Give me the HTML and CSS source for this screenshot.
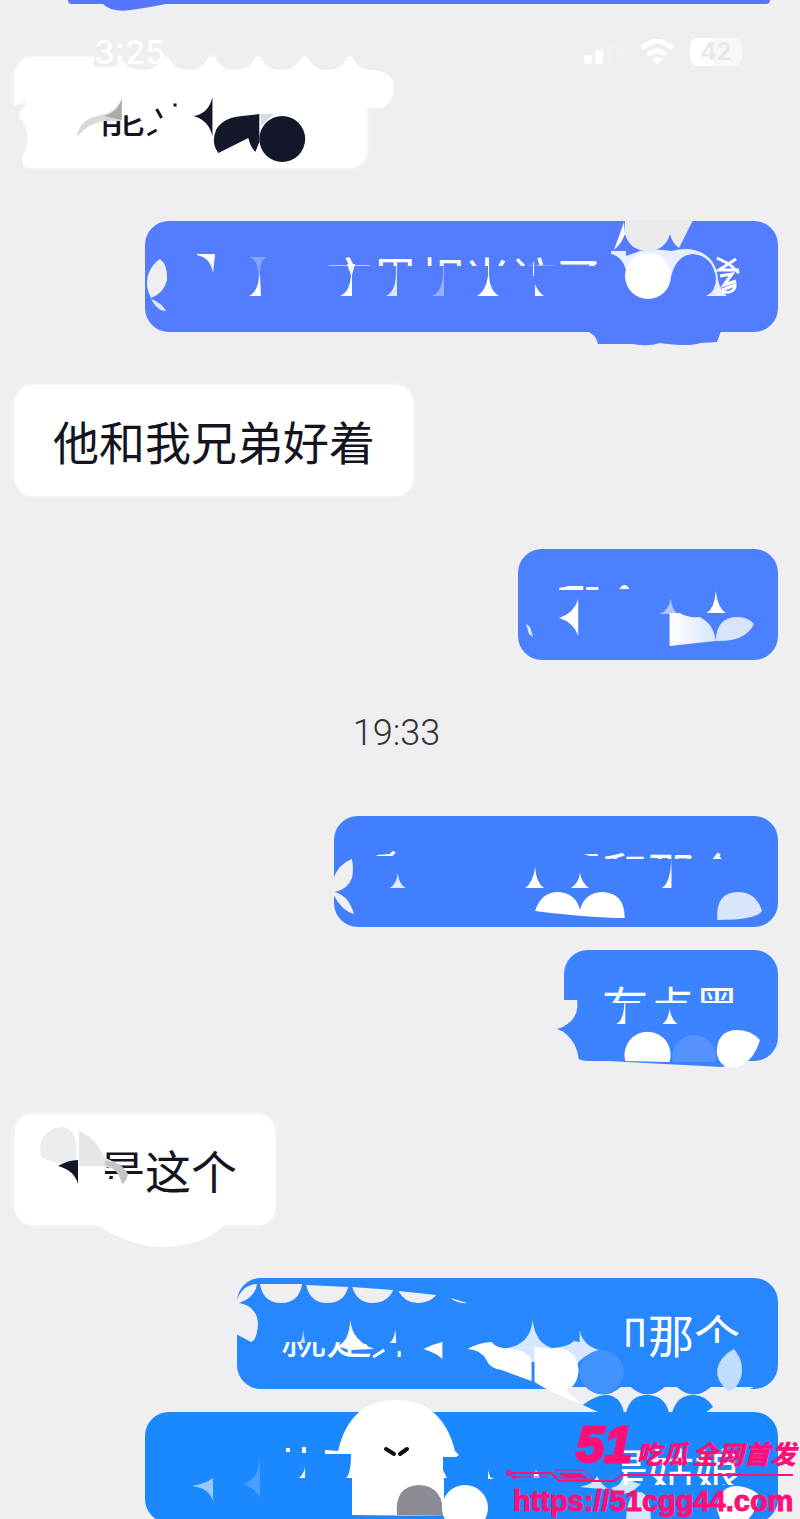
FILE: index.html
```
<!DOCTYPE html>
<html lang="zh-CN">
<head>
  <meta charset="UTF-8">
  <meta name="viewport" content="width=device-width, initial-scale=1.0">
  <title>聊天记录</title>
  <link rel="stylesheet" href="styles.css">
</head>
<body>
  <div class="screen">
    <!-- Status bar, floats over the conversation -->
    <header class="status">
      <span class="clock">3:25</span>
      <div class="status-icons">
        <svg width="40" height="26" viewBox="0 0 40 26" fill="#fff" aria-hidden="true">
          <rect x="0" y="16" width="8" height="9" rx="2"/>
          <rect x="11" y="11" width="8" height="14" rx="2"/>
          <rect x="22" y="6" width="7" height="19" rx="2" opacity=".15"/>
          <rect x="32" y="1" width="7" height="24" rx="2" opacity=".15"/>
        </svg>
        <svg width="34" height="26" viewBox="0 0 34 26" fill="none" stroke="#fff" stroke-width="5" aria-hidden="true">
          <path d="M2 9Q17-4 32 9"/>
          <path d="M8 16Q17 8 26 16"/>
          <path d="M12 20Q17 16 22 20L17 26z" fill="#fff" stroke="none"/>
        </svg>
        <span class="battery">42</span>
      </div>
    </header>

    <main class="chat">
      <div class="msg me peek">
        <svg class="art" viewBox="68 0 702 3" preserveAspectRatio="none" fill="#5577ff"><path d="M102 2Q108 8 124 8Q140 7 166 3z"/></svg>
      </div>

      <div class="msg other turn">
        <p>　<span class="low">能</span>　　　　</p>
        <svg class="art" viewBox="15 57 353 111" preserveAspectRatio="none">
          <g fill="#efeef0">
            <path d="M94 52H119Q121 66 112 67H94z"/>
            <path d="M120 52Q124 70 143 70Q160 70 165 52z"/>
            <path d="M167 52Q171 70 189 70Q206 70 211 52z"/>
            <path d="M214 52Q218 70 236 70Q253 70 258 52z"/>
            <path d="M260 52Q264 70 282 70Q299 70 304 52z"/>
            <path d="M307 52Q311 70 328 70Q345 70 350 52z"/>
            <path d="M352 52Q356 70 374 70V50z"/>
            <path d="M8 108L27 102L18 115Q35 136 22 157L24 174H8z"/>
          </g>
          <path d="M350 70H374Q394 72 395 86Q394 106 382 108H355z" fill="#fff"/>
          <path d="M77 137Q80 119 98 116Q118 112 122 98V121H105Q90 122 77 137z" fill="#d9d9d9"/>
          <path d="M104 116Q119 112 122 98V120z" fill="#aaa"/>
          <path d="M157 109L162 118M148 135L157 130M174 105H177" stroke="#14141e" stroke-width="3"/>
          <g fill="#14172a">
            <path d="M194 116Q209 114 213 97V136Q209 120 194 116z"/>
            <path d="M219 153Q211 143 217 129Q225 117 243 116L260 114V142L256 152Q251 147 249 138z"/>
          </g>
          <path d="M261 114H275L270 118L262 126z" fill="#d9dbe0"/>
          <circle cx="283" cy="139" r="23" fill="#14172a"/>
        </svg>
      </div>

      <div class="msg me wide tone-1 turn">
        <p>　　　<span class="top-sm">文里相米访了</span>　　　</p>
        <svg class="art" viewBox="145 221 633 111" preserveAspectRatio="none" fill="#fff">
          <path d="M160 259Q168 265 167 280Q164 293 151 298Q145 287 148 275Q152 264 160 259z" fill="#efeef0"/>
          <path d="M151 299Q162 303 166 311Q158 312 151 299z" fill="#dcecff"/>
          <path d="M197 254H215L213 273Q211 258 197 255z"/>
          <path d="M250 257H266Q259 262 260 276H258Q259 262 250 257z" opacity=".3"/>
          <path d="M249 296Q258 292 259 276H260L261 296z"/>
          <path d="M340 296Q350 292 351 275L347 264H355L352 275V296z"/>
          <path d="M386 296Q395 292 396 275V264H397V296" opacity=".8"/>
          <path d="M432 296Q442 292 443 275V264H444V296" opacity=".4"/>
          <path d="M477 296Q486 291 488 276V266H489V276Q490 291 499 296z"/>
          <path d="M533 262H534V276H533zM535 284Q538 292 544 296H535z"/>
          <path d="M625 220H693L679 248Q672 243 670 234Q665 251 648 251Q630 251 625 234z" fill="#eaeaec"/>
          <path d="M624 222L625 234Q622 243 614 250z"/>
          <path d="M611 251H626V256L640 251Q653 248 672 251Q690 246 704 254Q717 262 718 280Q721 292 727 296H706Q716 292 716 278Q713 256 693 254Q676 255 671 277L640 262L626 270Q622 256 611 254z" fill="#e9efff"/>
          <circle cx="648" cy="276" r="23"/>
          <path d="M717 258L729 264L739 273M736 259L719 270H739M720 276L732 274L724 285L736 281M721 292Q735 294 735 285L722 290" fill="none" stroke="#fff" stroke-width="3"/>
          <path d="M586 331Q596 334 598 344H633Q648 347 660 343Q690 347 700 343L717 342L721 331z" fill="#547cff"/>
        </svg>
      </div>

      <div class="msg other turn"><p>他和我兄弟好着</p></div>

      <div class="msg me tone-2 turn">
        <p>　　　　</p>
        <svg class="art" viewBox="519 550 259 111" preserveAspectRatio="none" fill="#fff">
          <defs>
            <linearGradient id="fade"><stop offset="0" stop-color="#fff"/><stop offset="1" stop-color="#d8e4fc"/></linearGradient>
          </defs>
          <path d="M560 589L570 587H584V591H560zM587 588H599V591H587zM620 590Q625 582 630 590z"/>
          <path d="M560 619Q575 614 579 600V637Q574 623 560 619z"/>
          <path d="M527 625L531 628L534 638L530 635z" fill="#dcecff"/>
          <path d="M660 615Q670 611 671 599Q672 610 678 615z" opacity=".55"/>
          <path d="M707 614Q715 609 716 592Q718 609 726 614z"/>
          <path d="M670 614H680Q688 619 700 618Q714 625 716 642L670 647z" fill="url(#fade)"/>
          <path d="M716 641Q717 618 738 618Q748 618 754 625Q746 643 716 642z" fill="#d8e4fc"/>
        </svg>
      </div>

      <time class="time">19:33</time>

      <div class="msg me tone-3">
        <p>　　　　　<span class="top-xs">和那个</span></p>
        <svg class="art" viewBox="332 816 446 111" preserveAspectRatio="none" fill="#fff">
          <path d="M331 880Q336 864 350 859Q352 870 350 878Q346 889 333 892Q347 896 352 914Q340 911 331 894z" fill="#efeef0"/>
          <path d="M375 855L388 854L391 851L394 852L391 856H375zM583 854H597V856H589z"/>
          <path d="M388 888Q395 884 396 873Q397 884 404 888z" opacity=".85"/>
          <path d="M524 888Q532 883 534 867Q535 883 543 888zM570 888Q578 883 579 873Q581 883 588 888zM661 888Q670 884 671 858V888z"/>
          <path d="M534 911Q540 892 557 892Q575 893 579 910Q584 892 602 892Q624 893 624 918Q590 918 534 911z"/>
          <path d="M717 920Q715 892 738 892Q756 892 762 911Q756 920 717 920z" fill="#d9e5fb"/>
        </svg>
      </div>

      <div class="msg me tone-4">
        <p><span class="top-md">有点黑</span></p>
        <svg class="art" viewBox="565 950 213 111" preserveAspectRatio="none" fill="#fff">
          <path d="M563 1000H578Q581 1020 560 1029Q579 1040 580 1063H563z" fill="#efeef0"/>
          <path d="M558 1029Q571 1026 578 1014V1046Q571 1033 558 1029z" fill="#3c83ff"/>
          <path d="M617 1024Q625 1020 625 1001H640V1002H626V1024zM663 1024Q669 1020 670 1009Q672 1020 678 1024z"/>
          <path d="M590 1060H750L722 1067z" fill="#3c83ff"/>
          <path d="M626 1061A23 23 0 1 1 670 1062z"/>
          <path d="M673 1062A22 22 0 1 1 716 1062z" fill="#5592ff"/>
          <path d="M717 1053Q717 1030 738 1030Q751 1030 760 1040Q754 1061 738 1067Q720 1070 717 1053z"/>
        </svg>
      </div>

      <div class="msg other turn">
        <p>　<span class="top-lg">是</span>这个</p>
        <svg class="art" viewBox="15 1114 260 111" preserveAspectRatio="none">
          <path d="M95 1224Q130 1246 160 1247Q205 1247 225 1224z" fill="#fff"/>
          <path d="M41 1157Q36 1131 61 1127Q79 1127 76 1160Q60 1167 41 1157z" fill="#ededef"/>
          <path d="M79 1131Q95 1137 105 1158Q118 1162 122 1171L102 1166H79z" fill="#e6e6e8"/>
          <path d="M105 1161Q121 1161 128 1174Q126 1183 122 1184Q118 1168 105 1165z" fill="#c4c4c7"/>
          <path d="M58 1166Q68 1160 78 1160V1184Q74 1170 58 1166z" fill="#14172a"/>
        </svg>
      </div>

      <div class="msg me wide tone-5 turn">
        <p><span class="low-lg">就是</span>　　　　　<span class="right">和</span>那<span class="top-xl">个</span></p>
        <svg class="art" viewBox="238 1278 540 111" preserveAspectRatio="none" fill="#fff">
          <g fill="#efeef0">
            <path d="M237 1276H257Q242 1282 238 1294z"/>
            <path d="M237 1303Q242 1285 258 1284Q256 1298 240 1303Q258 1306 259 1324Q258 1340 252 1342L237 1334z"/>
            <path d="M261 1284H303Q300 1303 282 1303Q264 1303 261 1284z"/>
            <path d="M307 1285L349 1287Q345 1303 328 1303Q311 1303 307 1285z"/>
            <path d="M353 1287L394 1290Q388 1303 373 1303Q358 1303 353 1287z"/>
            <path d="M399 1291L437 1295Q430 1303 418 1303Q406 1303 399 1291z"/>
            <path d="M451 1298L468 1303Q458 1304 451 1298z"/>
          </g>
          <path d="M300 1343Q304 1339 304 1330L306 1343z" opacity=".7"/>
          <path d="M338 1346Q350 1342 351 1320Q353 1341 375 1349L350 1350zM390 1343Q395 1340 396 1329L397 1343zM424 1349Q434 1344 443 1342V1359Q437 1353 424 1349z"/>
          <path d="M374 1357L385 1350M400 1351V1357" stroke="#fff" stroke-width="3"/>
          <path d="M508 1348Q531 1344 533 1320Q536 1343 552 1348Q569 1347 574 1341L580 1342V1330Q583 1345 599 1350Q582 1356 577 1365L533 1362z" fill="#d6e7ff"/>
          <path d="M468 1349Q478 1343 492 1342Q498 1349 508 1348Q526 1350 532 1359V1381L502 1370Q490 1368 487 1360Q482 1350 468 1349z"/>
          <path d="M535 1346Q545 1350 555 1348Q577 1348 579 1370Q578 1386 567 1390L583 1405Q552 1393 535 1382z"/>
          <path d="M568 1387H754L713 1407H584Q575 1396 568 1392z" fill="#efeef0"/>
          <path d="M586 1387H621Q604 1402 586 1387zM631 1387H665Q648 1402 631 1387zM677 1387H711Q694 1402 677 1387z" fill="#2787ff"/>
          <circle cx="602" cy="1372" r="22" fill="#4292ff"/>
          <path d="M734 1349Q745 1362 741 1378Q736 1391 728 1391Q717 1382 717 1370Q720 1356 734 1349z" fill="#c0dcff"/>
        </svg>
      </div>

      <div class="msg me wide tone-6">
        <p>　　　　　　　　　<span class="tail">是姑娘</span></p>
        <svg class="art" viewBox="145 1412 633 111" preserveAspectRatio="none" fill="#fff">
          <path d="M583 1405Q600 1392 612 1396Q622 1400 624 1413H600zM626 1413Q630 1395 647 1395Q665 1395 669 1413zM672 1413Q677 1395 693 1395Q706 1395 713 1407L705 1413z" fill="#1c88ff"/>
          <path d="M192 1486Q205 1484 213 1478V1501Q209 1488 192 1486z" opacity=".55"/>
          <path d="M243 1484Q259 1480 260 1456V1498Q255 1488 243 1484z" opacity=".2"/>
          <path d="M286 1448H290V1452H286zM302 1447H306V1453H302zM299 1478Q304 1474 305 1467V1478zM488 1470L490 1477L494 1479H488zM533 1478L536 1470L540 1478z"/>
          <path d="M338 1451Q350 1400 396 1400Q442 1400 455 1451L459 1455L456 1457H443V1470L447 1478H444V1516L352 1515V1478H346Q351 1474 351 1454H325V1450z"/>
          <path d="M386 1449L394 1454M407 1449L400 1454" stroke="#111" stroke-width="4" stroke-linecap="round"/>
          <path d="M397 1515Q394 1486 419 1485Q444 1486 443 1516z" fill="#8d8b94"/>
          <circle cx="465" cy="1508" r="23"/>
          <path d="M580 1487Q594 1484 597 1476Q602 1487 611 1490zM611 1488Q622 1486 624 1474Q630 1482 641 1484L634 1490Q622 1498 611 1488z" opacity=".8"/>
          <path d="M626 1524Q626 1493 640 1492Q651 1494 651 1524z" opacity=".8"/>
          <path d="M717 1510Q717 1488 735 1486Q748 1486 758 1494Q758 1514 742 1524H722z"/>
        </svg>
      </div>
    </main>

    <!-- Site mark in the corner -->
    <aside class="mark">
      <div class="mark-title"><span class="mark-num">51</span><span class="mark-cn">吃瓜</span><span class="mark-cn">全网首发</span></div>
      <svg class="mark-line" viewBox="0 0 290 14" fill="none" stroke="#ff0f77" stroke-width="2" aria-hidden="true">
        <circle cx="4" cy="4" r="2"/>
        <path d="M6 4H46L54 12H109L117 6H288"/>
        <path d="M10 8H42" stroke-width="1"/>
        <circle cx="9" cy="8" r="1"/>
        <path d="M47 5L51 1H80L89 10H59z" stroke-width="1"/>
        <path d="M52 4H76L82 9H60z" fill="#ff0f77" stroke="none"/>
      </svg>
      <a class="mark-url" href="https://51cgg44.com">https://51cgg44.com</a>
    </aside>
  </div>
</body>
</html>
```
FILE: styles.css
```
* {
  box-sizing: border-box;
}
body {
  margin: 0;
  background: #efeef0;
  font-family: "Noto Sans CJK SC", sans-serif;
  color: #14141e;
}
.screen {
  position: relative;
  height: 100vh;
  overflow: hidden;
}

/* Status bar */
.status {
  position: absolute;
  z-index: 2;
  top: 32px;
  left: 0;
  right: 0;
  display: flex;
  justify-content: space-between;
  align-items: center;
  padding: 0 58px 0 94px;
  height: 40px;
  color: #fff;
  font-family: Inter, sans-serif;
}
.clock {
  font-size: 33px;
  font-weight: 500;
}
.status-icons {
  display: flex;
  align-items: center;
  gap: 16px;
}
.battery {
  width: 52px;
  border-radius: 8px;
  background: linear-gradient(90deg, #fff 45%, #f7f7f8 45%);
  color: #e8e8ea;
  font-size: 24px;
  line-height: 28px;
  font-weight: 600;
  text-align: center;
}

/* Conversation */
.chat {
  display: flex;
  flex-direction: column;
  align-items: flex-end;
  padding: 0 22px 0 15px;
}
.msg {
  position: relative;
  flex-shrink: 0;
  margin-top: 23px;
  padding: 26px 38px;
  border-radius: 24px;
  font-size: 46px;
  line-height: 59px;
}
.msg p {
  margin: 0;
  white-space: pre;
}
.msg p span {
  display: inline-block;
  vertical-align: top;
}
.other {
  align-self: flex-start;
  border-radius: 18px;
  background: #fff;
  box-shadow: 0 0 4px #fff;
}
.me {
  color: #fff;
}
.wide {
  padding-left: 43px;
}
.turn {
  margin-top: 53px;
}
.peek {
  width: 92%;
  height: 4px;
  margin: 0 8px 0 0;
  padding: 0;
  border-radius: 0 0 16px 16px;
  background: #5577ff;
}
.tone-1 { background: #547cff; }
.tone-2 { background: #4b80ff; }
.tone-3 { background: #427fff; }
.tone-4 { background: #3c83ff; }
.tone-5 { background: #2787ff; }
.tone-6 { background: #1c88ff; }

/* Shapes scribbled over a bubble */
.art {
  position: absolute;
  inset: 0;
  width: 100%;
  height: 100%;
  overflow: visible;
}

/* Partly wiped characters */
.low { clip-path: inset(32px 0 0 0); }
.low-lg { clip-path: inset(38px 0 0 0); }
.top-xs { clip-path: inset(0 0 42px 0); }
.top-sm { clip-path: inset(0 0 40px 0); }
.top-md { clip-path: inset(0 0 32px 0); }
.top-lg { clip-path: inset(0 0 20px 6px); }
.top-xl { clip-path: inset(0 0 20px 0); }
.right { clip-path: inset(0 0 16px 24px); }
.tail { clip-path: inset(10px 0 12px 20px); }

.time {
  align-self: center;
  margin: 44px 0 31px;
  font-family: Roboto, sans-serif;
  font-size: 36px;
  font-weight: 300;
  line-height: 58px;
  color: #333;
}

/* Corner mark */
.mark {
  position: absolute;
  z-index: 3;
  right: 0;
  bottom: 0;
  width: 295px;
  color: #ff0f77;
}
.mark-title {
  display: flex;
  align-items: flex-end;
  justify-content: flex-end;
  gap: 4px;
  padding-right: 4px;
  font-style: italic;
  line-height: 32px;
}
.mark-num {
  font-family: "Liberation Sans", sans-serif;
  font-size: 50px;
  line-height: 48px;
  font-weight: 700;
  -webkit-text-stroke: 3px #ff0f77;
}
.mark-cn {
  font-size: 26px;
  font-weight: 900;
}
.mark-line {
  display: block;
  width: 290px;
  height: 14px;
}
.mark-url {
  display: block;
  padding-left: 8px;
  font-family: "Liberation Sans", sans-serif;
  font-size: 29px;
  line-height: 36px;
  font-weight: 700;
  color: #ff0f77;
  text-decoration: none;
  -webkit-text-stroke: 1px #ff0f77;
}
```
